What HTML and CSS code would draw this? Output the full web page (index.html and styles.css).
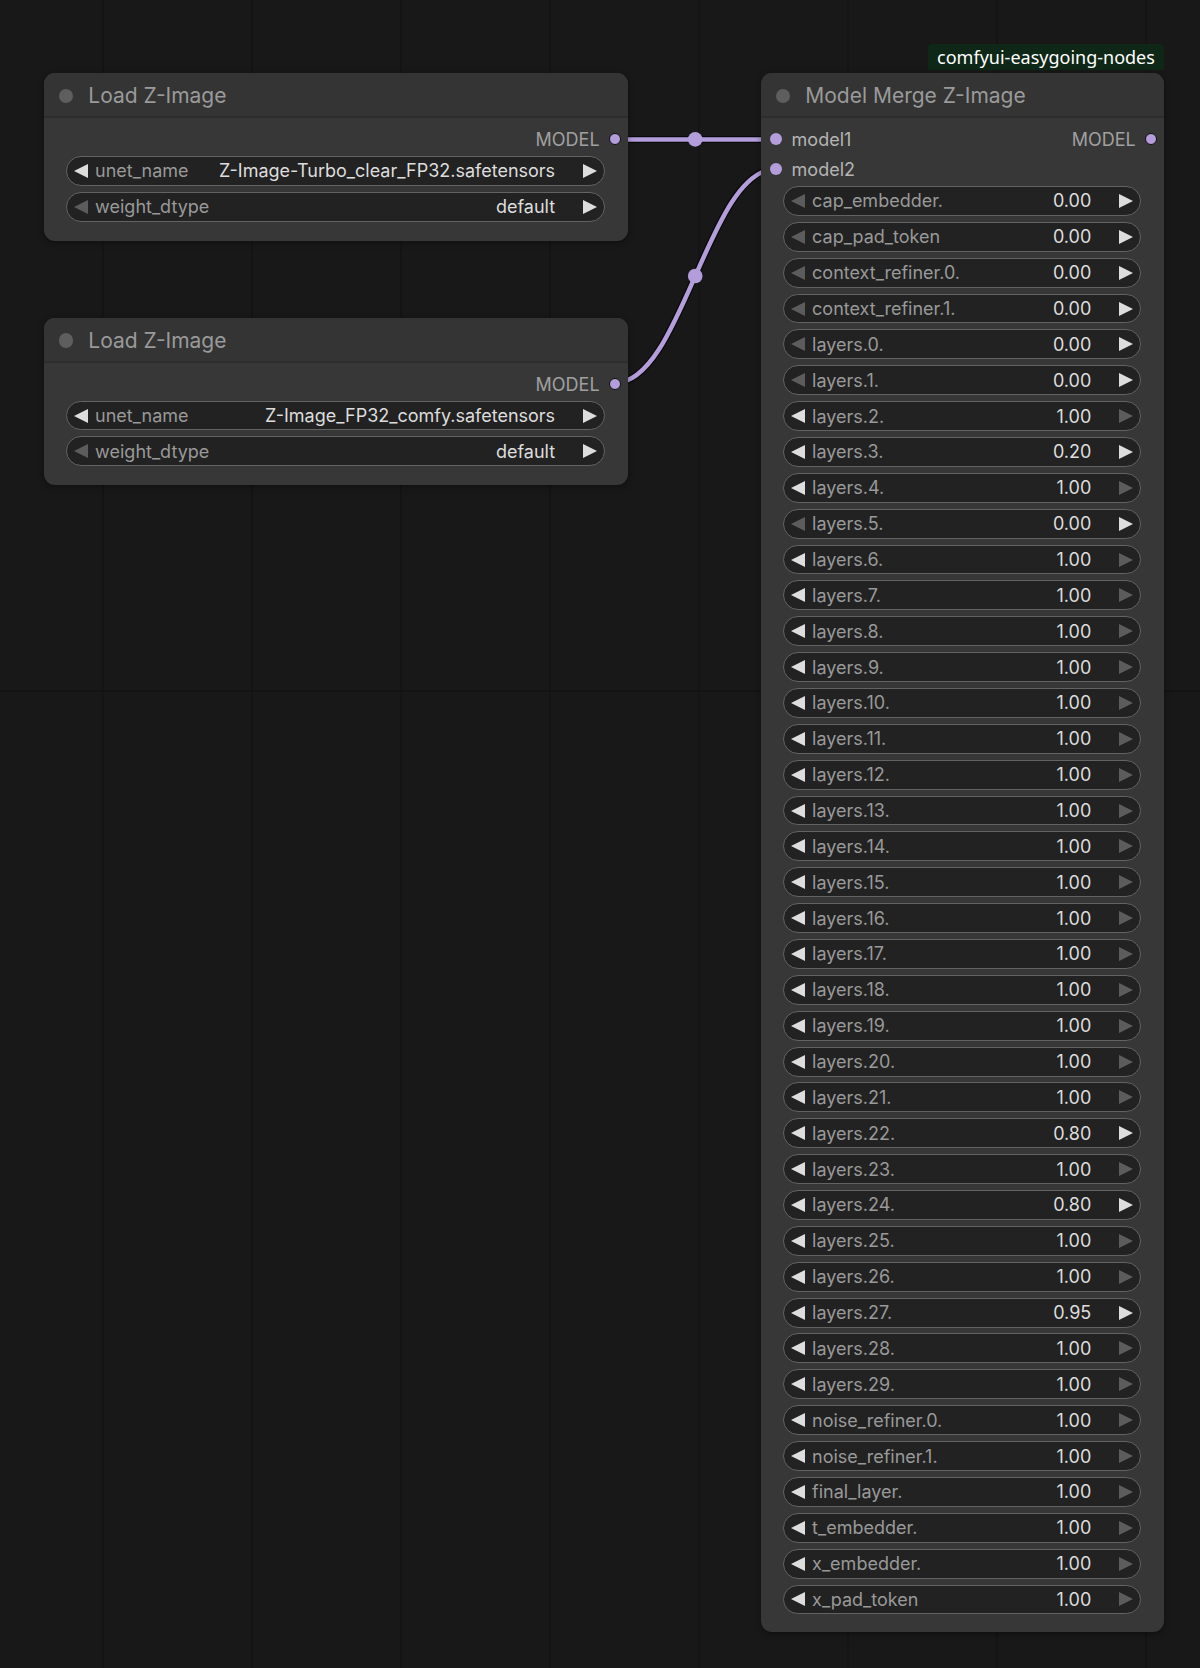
FILE: index.html
```html
<!DOCTYPE html>
<html lang="en">
<head>
<meta charset="UTF-8">
<title>Model Merge Z-Image</title>
<link rel="stylesheet" href="styles.css">
</head>
<body>

<div class="graph">
    <!-- links run under the nodes -->
    <svg class="links" width="1200" height="1668" viewBox="0 0 1200 1668">
        <path class="link-edge" d="M615 139.4 L775.5 139.4"/>
        <path class="link" d="M615 139.4 L775.5 139.4"/>
        <path class="link-edge" d="M615 383 C681.9 383 708.6 169.1 775.5 169.1"/>
        <path class="link" d="M615 383 C681.9 383 708.6 169.1 775.5 169.1"/>
        <circle class="link-mid" cx="695.2" cy="139.4" r="7.3"/>
        <circle class="link-mid" cx="695.2" cy="276" r="7.3"/>
    </svg>

    <div class="badge">comfyui-easygoing-nodes</div>

    <div class="node load-a">
        <div class="node-title"><span class="title-dot"></span>Load Z-Image</div>
        <div class="node-body">
            <div class="slot-row">
                <span class="slot-out">MODEL<i class="dot out"></i></span>
            </div>
            <div class="widgets">
                <div class="widget"><span class="arrow l"></span><span class="w-label">unet_name</span><span class="w-value">Z-Image-Turbo_clear_FP32.safetensors</span><span class="arrow r"></span></div>
                <div class="widget"><span class="arrow l off"></span><span class="w-label">weight_dtype</span><span class="w-value">default</span><span class="arrow r"></span></div>
            </div>
        </div>
    </div>

    <div class="node load-b">
        <div class="node-title"><span class="title-dot"></span>Load Z-Image</div>
        <div class="node-body">
            <div class="slot-row">
                <span class="slot-out">MODEL<i class="dot out"></i></span>
            </div>
            <div class="widgets">
                <div class="widget"><span class="arrow l"></span><span class="w-label">unet_name</span><span class="w-value">Z-Image_FP32_comfy.safetensors</span><span class="arrow r"></span></div>
                <div class="widget"><span class="arrow l off"></span><span class="w-label">weight_dtype</span><span class="w-value">default</span><span class="arrow r"></span></div>
            </div>
        </div>
    </div>

    <div class="node merge">
        <div class="node-title"><span class="title-dot"></span>Model Merge Z-Image</div>
        <div class="node-body">
            <div class="slot-row">
                <span class="slot-in"><i class="dot in"></i>model1</span>
                <span class="slot-out">MODEL<i class="dot out"></i></span>
            </div>
            <div class="slot-row">
                <span class="slot-in"><i class="dot in"></i>model2</span>
            </div>
            <div class="widgets">
                <div class="widget"><span class="arrow l off"></span><span class="w-label">cap_embedder.</span><span class="w-value">0.00</span><span class="arrow r"></span></div>
                <div class="widget"><span class="arrow l off"></span><span class="w-label">cap_pad_token</span><span class="w-value">0.00</span><span class="arrow r"></span></div>
                <div class="widget"><span class="arrow l off"></span><span class="w-label">context_refiner.0.</span><span class="w-value">0.00</span><span class="arrow r"></span></div>
                <div class="widget"><span class="arrow l off"></span><span class="w-label">context_refiner.1.</span><span class="w-value">0.00</span><span class="arrow r"></span></div>
                <div class="widget"><span class="arrow l off"></span><span class="w-label">layers.0.</span><span class="w-value">0.00</span><span class="arrow r"></span></div>
                <div class="widget"><span class="arrow l off"></span><span class="w-label">layers.1.</span><span class="w-value">0.00</span><span class="arrow r"></span></div>
                <div class="widget"><span class="arrow l"></span><span class="w-label">layers.2.</span><span class="w-value">1.00</span><span class="arrow r off"></span></div>
                <div class="widget"><span class="arrow l"></span><span class="w-label">layers.3.</span><span class="w-value">0.20</span><span class="arrow r"></span></div>
                <div class="widget"><span class="arrow l"></span><span class="w-label">layers.4.</span><span class="w-value">1.00</span><span class="arrow r off"></span></div>
                <div class="widget"><span class="arrow l off"></span><span class="w-label">layers.5.</span><span class="w-value">0.00</span><span class="arrow r"></span></div>
                <div class="widget"><span class="arrow l"></span><span class="w-label">layers.6.</span><span class="w-value">1.00</span><span class="arrow r off"></span></div>
                <div class="widget"><span class="arrow l"></span><span class="w-label">layers.7.</span><span class="w-value">1.00</span><span class="arrow r off"></span></div>
                <div class="widget"><span class="arrow l"></span><span class="w-label">layers.8.</span><span class="w-value">1.00</span><span class="arrow r off"></span></div>
                <div class="widget"><span class="arrow l"></span><span class="w-label">layers.9.</span><span class="w-value">1.00</span><span class="arrow r off"></span></div>
                <div class="widget"><span class="arrow l"></span><span class="w-label">layers.10.</span><span class="w-value">1.00</span><span class="arrow r off"></span></div>
                <div class="widget"><span class="arrow l"></span><span class="w-label">layers.11.</span><span class="w-value">1.00</span><span class="arrow r off"></span></div>
                <div class="widget"><span class="arrow l"></span><span class="w-label">layers.12.</span><span class="w-value">1.00</span><span class="arrow r off"></span></div>
                <div class="widget"><span class="arrow l"></span><span class="w-label">layers.13.</span><span class="w-value">1.00</span><span class="arrow r off"></span></div>
                <div class="widget"><span class="arrow l"></span><span class="w-label">layers.14.</span><span class="w-value">1.00</span><span class="arrow r off"></span></div>
                <div class="widget"><span class="arrow l"></span><span class="w-label">layers.15.</span><span class="w-value">1.00</span><span class="arrow r off"></span></div>
                <div class="widget"><span class="arrow l"></span><span class="w-label">layers.16.</span><span class="w-value">1.00</span><span class="arrow r off"></span></div>
                <div class="widget"><span class="arrow l"></span><span class="w-label">layers.17.</span><span class="w-value">1.00</span><span class="arrow r off"></span></div>
                <div class="widget"><span class="arrow l"></span><span class="w-label">layers.18.</span><span class="w-value">1.00</span><span class="arrow r off"></span></div>
                <div class="widget"><span class="arrow l"></span><span class="w-label">layers.19.</span><span class="w-value">1.00</span><span class="arrow r off"></span></div>
                <div class="widget"><span class="arrow l"></span><span class="w-label">layers.20.</span><span class="w-value">1.00</span><span class="arrow r off"></span></div>
                <div class="widget"><span class="arrow l"></span><span class="w-label">layers.21.</span><span class="w-value">1.00</span><span class="arrow r off"></span></div>
                <div class="widget"><span class="arrow l"></span><span class="w-label">layers.22.</span><span class="w-value">0.80</span><span class="arrow r"></span></div>
                <div class="widget"><span class="arrow l"></span><span class="w-label">layers.23.</span><span class="w-value">1.00</span><span class="arrow r off"></span></div>
                <div class="widget"><span class="arrow l"></span><span class="w-label">layers.24.</span><span class="w-value">0.80</span><span class="arrow r"></span></div>
                <div class="widget"><span class="arrow l"></span><span class="w-label">layers.25.</span><span class="w-value">1.00</span><span class="arrow r off"></span></div>
                <div class="widget"><span class="arrow l"></span><span class="w-label">layers.26.</span><span class="w-value">1.00</span><span class="arrow r off"></span></div>
                <div class="widget"><span class="arrow l"></span><span class="w-label">layers.27.</span><span class="w-value">0.95</span><span class="arrow r"></span></div>
                <div class="widget"><span class="arrow l"></span><span class="w-label">layers.28.</span><span class="w-value">1.00</span><span class="arrow r off"></span></div>
                <div class="widget"><span class="arrow l"></span><span class="w-label">layers.29.</span><span class="w-value">1.00</span><span class="arrow r off"></span></div>
                <div class="widget"><span class="arrow l"></span><span class="w-label">noise_refiner.0.</span><span class="w-value">1.00</span><span class="arrow r off"></span></div>
                <div class="widget"><span class="arrow l"></span><span class="w-label">noise_refiner.1.</span><span class="w-value">1.00</span><span class="arrow r off"></span></div>
                <div class="widget"><span class="arrow l"></span><span class="w-label">final_layer.</span><span class="w-value">1.00</span><span class="arrow r off"></span></div>
                <div class="widget"><span class="arrow l"></span><span class="w-label">t_embedder.</span><span class="w-value">1.00</span><span class="arrow r off"></span></div>
                <div class="widget"><span class="arrow l"></span><span class="w-label">x_embedder.</span><span class="w-value">1.00</span><span class="arrow r off"></span></div>
                <div class="widget"><span class="arrow l"></span><span class="w-label">x_pad_token</span><span class="w-value">1.00</span><span class="arrow r off"></span></div>
            </div>
        </div>
    </div>
</div>

</body>
</html>
```

FILE: styles.css
```css
body {
    margin: 0;
    background-color: #181818;
    font-family: 'Inter', 'Liberation Sans', sans-serif;
}

/* canvas: vertical grid lines plus one horizontal */
.graph {
    position: relative;
    width: 1200px;
    height: 1668px;
    overflow: hidden;
    background-color: #181818;
    background-image:
        linear-gradient(#131313 2px, transparent 2px),
        linear-gradient(90deg, #141414 2px, transparent 2px);
    background-size: 1200px 1668px, 149px 149px;
    background-position: 0 690px, 102px 0;
    background-repeat: no-repeat, repeat;
}

.links {
    position: absolute;
    left: 0;
    top: 0;
}
.link, .link-edge {
    fill: none;
    stroke-linecap: round;
}
.link-edge {
    stroke: rgba(0, 0, 0, 0.6);
    stroke-width: 7;
}
.link {
    stroke: #b39ddb;
    stroke-width: 4.5;
}
.link-mid { fill: #b39ddb; }

.badge {
    position: absolute;
    left: 928px;
    top: 44px;
    width: 236px;
    height: 26px;
    box-sizing: border-box;
    background: #0f2716;
    border-radius: 4px 4px 0 0;
    color: #fff;
    font-family: 'Noto Sans', 'Open Sans', sans-serif;
    font-size: 18px;
    line-height: 26px;
    text-align: center;
}

/* nodes */
.node {
    position: absolute;
    background: #373737;
    border-radius: 11px;
    box-shadow: 0 2px 6px rgba(0, 0, 0, 0.35);
    overflow: hidden;
}
.load-a { left: 43.6px; top: 73.4px; width: 584px; }
.load-b { left: 43.6px; top: 318px; width: 584px; }
.merge  { left: 760.6px; top: 73.4px; width: 403.2px; }

.node-title {
    height: 45px;
    box-sizing: border-box;
    padding-top: 2px;
    display: flex;
    align-items: center;
    background: #343434;
    border-bottom: 2px solid #2d2d2d;
    color: #9a9a9a;
    font-size: 21px;
}
.title-dot {
    width: 14.6px;
    height: 14.6px;
    border-radius: 50%;
    background: #5e5e5e;
    margin: 0 15px 0 15.1px;
}

.node-body {
    padding: 6px 0 19px;
}
.merge .node-body { padding-bottom: 18px; }

.slot-row {
    height: 30px;
    display: flex;
    align-items: center;
    font-size: 18px;
}
.slot-in {
    display: flex;
    align-items: center;
    gap: 9.5px;
    padding-left: 9.5px;
    color: #b4b4b4;
}
.slot-out {
    display: flex;
    align-items: center;
    gap: 9px;
    margin-left: auto;
    padding-right: 7px;
    color: #a0a0a0;
}
.dot {
    display: block;
    width: 12px;
    height: 12px;
    border-radius: 50%;
    background: #b39ddb;
    box-sizing: border-box;
}
.dot.out {
    border: 1.5px solid #111;
}

/* combo and number widgets */
.widgets {
    display: flex;
    flex-direction: column;
    gap: 5.97px;
    padding: 1.6px 22.4px 0;
}
.widget {
    height: 29.9px;
    box-sizing: border-box;
    display: flex;
    align-items: center;
    background: #222;
    border: 1.5px solid #636363;
    border-radius: 15px;
    font-size: 18px;
    white-space: nowrap;
}
.w-label {
    color: #999;
    margin-left: 6.6px;
}
.w-value {
    color: #ddd;
    margin-left: auto;
    margin-right: 27.6px;
}
.arrow {
    width: 0;
    height: 0;
    border-top: 7px solid transparent;
    border-bottom: 7px solid transparent;
}
.arrow.l {
    margin-left: 7.5px;
    border-right: 14.4px solid #ddd;
}
.arrow.r {
    margin-right: 7.5px;
    border-left: 14.4px solid #ddd;
}
.arrow.l.off { border-right-color: #5c5c5c; }
.arrow.r.off { border-left-color: #5c5c5c; }
```
